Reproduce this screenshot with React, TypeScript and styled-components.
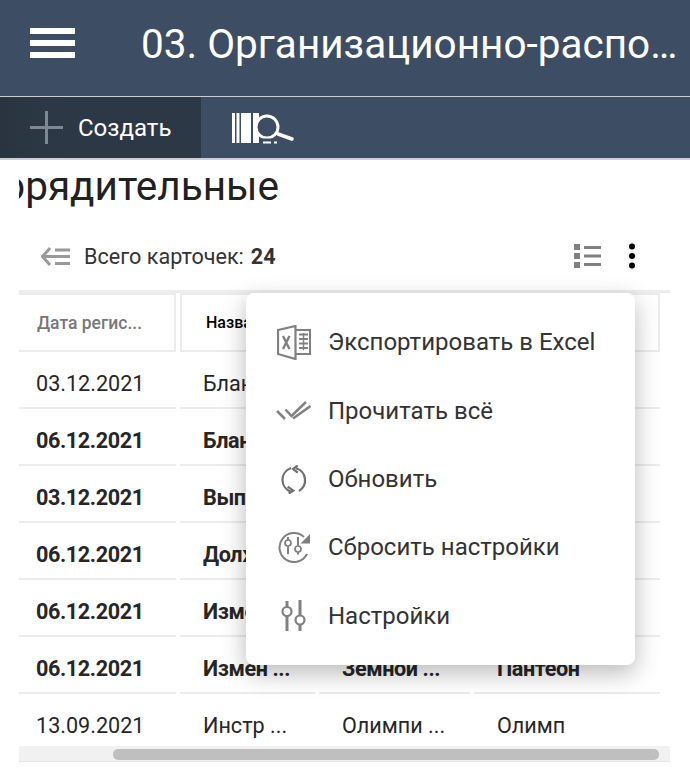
import React from "react";
import styled, { createGlobalStyle } from "styled-components";

const Global = createGlobalStyle`
  html, body { margin: 0; padding: 0; background: #fff; }
  body { font-family: Roboto, "Noto Sans", sans-serif; overflow: hidden; }
`;

const Page = styled.div`
  position: relative;
  width: 690px;
  height: 768px;
  overflow: hidden;
  background: #fff;
`;
const Header = styled.header`
  height: 96px;
  padding-bottom: 9px;
  box-sizing: content-box;
  height: 87px;
  display: flex;
  align-items: center;
  background: #3d4d63;
  border-bottom: 1px solid #c9ced5;
`;
const Burger = styled.button`
  width: 45px;
  height: 30px;
  margin: 0 66px 2px 30px;
  padding: 0;
  border: 0;
  background: transparent;
  display: flex;
  flex-direction: column;
  justify-content: space-between;
  flex: none;
  & > span { display: block; height: 6px; background: #fff; }
`;
const HeaderTitle = styled.h1`
  margin: 0;
  width: 540px;
  font-size: 40.500px;
  font-weight: 400;
  line-height: 46px;
  color: #fff;
  white-space: nowrap;
  overflow: hidden;
  text-overflow: ellipsis;
`;
const Toolbar = styled.div`
  height: 61px;
  display: flex;
  background: #3d4d63;
  border-bottom: 2px solid #ccd0d6;
`;
const CreateButton = styled.button`
  width: 201px;
  padding: 0 0 0 30px;
  border: 0;
  background: linear-gradient(90deg, #2a3441, #2d3846 30%);
  display: flex;
  align-items: center;
  gap: 15px;
  color: #fff;
  font: 400 24px Roboto, sans-serif;
`;
const ToolButton = styled.button`
  margin-left: 31px;
  padding: 0;
  border: 0;
  background: transparent;
  display: flex;
  align-items: center;
`;
const PageTitle = styled.div`
  margin-left: 19px;
  width: 260px;
  height: 54px;
  display: flex;
  justify-content: flex-end;
  overflow: hidden;
  font-size: 40.500px;
  line-height: 52px;
  color: #212121;
  white-space: nowrap;
`;
const Summary = styled.div`
  height: 76px;
  padding: 8px 54px 0 41px;
  box-sizing: border-box;
  display: flex;
  align-items: center;
  font-size: 21.600px;
  color: #333;
  & > b { margin-left: 7px; font-weight: 700; }
`;
const SummaryLabel = styled.span`
  margin-left: 13px;
`;
const SummaryActions = styled.div`
  margin-left: auto;
  display: flex;
  align-items: center;
  gap: 27px;
`;
const Table = styled.div`
  margin: 0 0 0 19px;
  width: 651px;
  border-top: 3px solid #ededed;
  display: grid;
  grid-template-columns: 157px 135px 151px 186px;
  column-gap: 4px;
  grid-auto-rows: 57px;
`;
const HeadCell = styled.div<{ $strong?: boolean }>`
  box-sizing: border-box;
  height: 59px;
  padding-left: ${p => (p.$strong ? 24 : 18)}px;
  border: 2px solid #ececec;
  border-left-width: ${p => (p.$strong ? 2 : 0)}px;
  display: flex;
  align-items: center;
  font-size: ${p => (p.$strong ? 16 : 17.5)}px;
  font-weight: 500;
  color: ${p => (p.$strong ? "#000" : "#777")};
  white-space: nowrap;
`;
const Cell = styled.div<{ $bold?: boolean; $first?: boolean }>`
  box-sizing: border-box;
  height: 57px;
  padding: 8px 0 0 ${p => (p.$first ? 17 : 23)}px;
  border-bottom: 2px solid #ececec;
  display: flex;
  align-items: center;
  font-size: 21.600px;
  font-weight: ${p => (p.$bold ? 700 : 400)};
  letter-spacing: ${p => (p.$bold ? -0.4 : 0)}px;
  color: #262626;
  white-space: nowrap;
  overflow: hidden;
  transform: translateY(2px);
`;
const ScrollTrack = styled.div`
  margin: -3px 0 0 19px;
  width: 651px;
  height: 16px;
  padding: 3px 0 0 94px;
  box-sizing: border-box;
  background: #f1f1f1;
  border-bottom: 1px solid #e6e6e6;
  position: relative;
`;
const Thumb = styled.div`
  width: 546px;
  height: 11px;
  border-radius: 5px;
  background: #bfbfbf;
`;
const Menu = styled.div`
  position: absolute;
  left: 246px;
  top: 293px;
  width: 389px;
  height: 372px;
  padding: 15px 0;
  box-sizing: border-box;
  background: #fff;
  border-radius: 8px;
  box-shadow: 0 8px 24px rgba(0, 0, 0, 0.28);
  display: flex;
  flex-direction: column;
`;
const MenuItem = styled.div`
  height: 68.700px;
  display: flex;
  align-items: center;
  font-size: 24px;
  color: #333;
  white-space: nowrap;
`;
const MenuIcon = styled.span`
  width: 82px;
  padding-left: 13px;
  box-sizing: border-box;
  display: flex;
  justify-content: center;
  flex: none;
`;

const G = "#808080";

const PlusIcon = () => (
  <svg width="33" height="33" viewBox="0 0 33 33">
    <path d="M0 16.500h33M16.500 0v33" stroke="#7e8793" strokeWidth="3" />
  </svg>
);
const LibraryIcon = () => (
  <svg width="62" height="32" viewBox="0 0 62 32" fill="none">
    <path d="M0 1h3v30H0zM4.500 1h3v30h-3zM9 1h10v30H9zM21 1h6v30h-6z" fill="#fff" />
    <circle cx="35" cy="15" r="11" fill="#3d4d63" stroke="#fff" strokeWidth="3" />
    <path d="M27 26.500h14v6H27z" fill="#3d4d63" />
    <path d="M46 22l14 5" stroke="#fff" strokeWidth="3.500" strokeLinecap="round" />
    <path d="M31 29.500h8v2h-8zM42 29.500h3v2h-3z" fill="#fff" />
  </svg>
);
const BackIcon = () => (
  <svg width="30" height="19" viewBox="0 0 30 19" fill="none">
    <path d="M9 1L1.500 9.500 9 18" stroke="#999" strokeWidth="3" />
    <path d="M3 9.500h26M14 3h15M14 16.500h15" stroke="#999" strokeWidth="3" />
  </svg>
);
const ListIcon = () => (
  <svg width="27" height="24" viewBox="0 0 27 24" fill={G}>
    <path d="M0 0h6v6H0zM0 9h6v6H0zM0 18h6v6H0z" />
    <path d="M10 2h17v3H10zM10 10.500h17v3H10zM10 19h17v3H10z" />
  </svg>
);
const Kebab = () => (
  <svg width="8" height="26" viewBox="0 0 8 26" fill="#000">
    <circle cx="4" cy="3.500" r="3" />
    <circle cx="4" cy="13" r="3" />
    <circle cx="4" cy="22.500" r="3" />
  </svg>
);
const ExcelIcon = () => (
  <svg width="34" height="35" viewBox="0 0 34 35" fill="none">
    <path d="M1 5L18.500 1v33L1 29z" stroke={G} strokeWidth="2.200" />
    <path d="M18.500 5H33v24H18.500" stroke={G} strokeWidth="2" />
    <path d="M22 9.500h9M22 14h9M22 18.500h9M22 23h9" stroke={G} strokeWidth="2" />
    <path d="M26.500 8v17" stroke={G} strokeWidth="1.500" />
    <path d="M6 11l6.500 13M12.500 11L6 24" stroke={G} strokeWidth="2.400" />
  </svg>
);
const ChecksIcon = () => (
  <svg width="35" height="19" viewBox="0 0 35 19" fill="none">
    <path d="M1 10l8 8" stroke={G} strokeWidth="2.500" />
    <path d="M9.500 8.500l6 6.500L30 1" stroke={G} strokeWidth="2.500" />
    <path d="M17 17.500L34.500 5" stroke={G} strokeWidth="2.500" />
  </svg>
);
const RefreshIcon = () => (
  <svg width="28" height="29" viewBox="0 0 28 29" fill="none">
    <path d="M11 3A12.500 12.500 0 0 0 11 26.700" stroke="#707070" strokeWidth="2.200" />
    <path d="M19 26A12.500 12.500 0 0 0 16 3.300" stroke="#707070" strokeWidth="2.200" />
    <path d="M17.700 0.500L13 4l4.700 3.700M7.700 21.700l5.600 4L8.700 28.500" stroke="#707070" strokeWidth="2.200" />
  </svg>
);
const ResetIcon = () => (
  <svg width="35" height="32" viewBox="0 0 35 32" fill="none">
    <path d="M31 23A14.500 14.500 0 1 1 28 6" stroke={G} strokeWidth="2" />
    <path d="M34 3v9.500H24.500z" fill={G} />
    <path d="M12 6v3M12 15.500V23M22 6v8.500M22 21v2.500" stroke={G} strokeWidth="2" />
    <circle cx="12" cy="12" r="3" stroke={G} strokeWidth="1.700" />
    <circle cx="22" cy="18" r="3" stroke={G} strokeWidth="1.700" />
  </svg>
);
const SlidersIcon = () => (
  <svg width="25" height="31" viewBox="0 0 25 31" fill="none">
    <path d="M6 1v6M6 16v15M19 0v15M19 25v6" stroke={G} strokeWidth="3" />
    <circle cx="6" cy="11.500" r="4.500" stroke={G} strokeWidth="2.200" />
    <circle cx="19" cy="20" r="4.500" stroke={G} strokeWidth="2.200" />
  </svg>
);

const rows = [
  { d: "03.12.2021", a: "Бланк ...", b: "Олимпи ...", c: "Олимп", bold: false },
  { d: "06.12.2021", a: "Бланк ...", b: "Земной ...", c: "Пантеон", bold: true },
  { d: "03.12.2021", a: "Выпис ...", b: "Земной ...", c: "Пантеон", bold: true },
  { d: "06.12.2021", a: "Долж ...", b: "Земной ...", c: "Пантеон", bold: true },
  { d: "06.12.2021", a: "Измен ...", b: "Земной ...", c: "Пантеон", bold: true },
  { d: "06.12.2021", a: "Измен ...", b: "Земной  ...", c: "Пантеон", bold: true },
  { d: "13.09.2021", a: "Инстр ...", b: "Олимпи ...", c: "Олимп", bold: false },
];

const menu = [
  { Icon: ExcelIcon, label: "Экспортировать в Excel" },
  { Icon: ChecksIcon, label: "Прочитать всё" },
  { Icon: RefreshIcon, label: "Обновить" },
  { Icon: ResetIcon, label: "Сбросить настройки" },
  { Icon: SlidersIcon, label: "Настройки" },
];

export default function App() {
  return (
    <Page>
      <Global />
      <Header>
        <Burger aria-label="Меню">
          <span />
          <span />
          <span />
        </Burger>
        <HeaderTitle>03. Организационно-распорядительные</HeaderTitle>
      </Header>
      <Toolbar>
        <CreateButton>
          <PlusIcon />
          Создать
        </CreateButton>
        <ToolButton aria-label="Поиск">
          <LibraryIcon />
        </ToolButton>
      </Toolbar>
      <PageTitle>03. Организационно-распорядительные</PageTitle>
      <Summary>
        <BackIcon />
        <SummaryLabel>Всего карточек:</SummaryLabel>
        <b>24</b>
        <SummaryActions>
          <ListIcon />
          <Kebab />
        </SummaryActions>
      </Summary>
      <Table>
        <HeadCell>Дата регис...</HeadCell>
        <HeadCell $strong>Название</HeadCell>
        <HeadCell $strong>Контрагент</HeadCell>
        <HeadCell $strong>Организация</HeadCell>
        {rows.map((r, i) => (
          <React.Fragment key={i}>
            <Cell $first $bold={r.bold}>{r.d}</Cell>
            <Cell $bold={r.bold}>{r.a}</Cell>
            <Cell $bold={r.bold}>{r.b}</Cell>
            <Cell $bold={r.bold}>{r.c}</Cell>
          </React.Fragment>
        ))}
      </Table>
      <ScrollTrack>
        <Thumb />
      </ScrollTrack>
      <Menu>
        {menu.map(({ Icon, label }) => (
          <MenuItem key={label}>
            <MenuIcon>
              <Icon />
            </MenuIcon>
            {label}
          </MenuItem>
        ))}
      </Menu>
    </Page>
  );
}
